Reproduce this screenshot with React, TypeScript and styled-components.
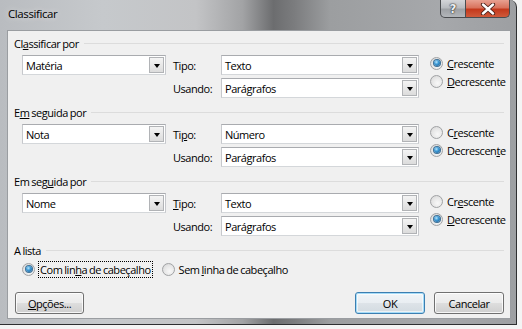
import styled, { createGlobalStyle, css } from 'styled-components'

const GlobalStyle = createGlobalStyle`
  html, body {
    margin: 0;
    padding: 0;
    background: #f4f4f4;
  }
  body {
    font-family: "Open Sans", "Noto Sans", sans-serif;
    font-size: 11px;
    letter-spacing: -0.46px;
    word-spacing: -0.5px;
    color: #000;
  }
`

const Window = styled.div`
  width: 517px;
  height: 325px;
  box-sizing: border-box;
  border-right: 1px solid #2e2f31;
  border-bottom: 1px solid #2e2f31;
  border-top-right-radius: 7px;
  background: linear-gradient(to right, #b9bcc0 0%, #c6c9cc 20%, #c3c4c6 38%, #a2a3a5 47%, #6c6d6f 53%, #7b7c7e 57%, #9c9ea0 64%, #a6a8ab 85%, #9d9fa2 100%);
  display: flex;
  flex-direction: column;
  padding: 0 5px 5px 7px;
`

const TitleBar = styled.div`
  height: 30px;
  display: flex;
  justify-content: space-between;
  align-items: flex-start;
`

const Title = styled.div`
  padding: 6px 0 0 1px;
  font-size: 11.5px;
  letter-spacing: -0.4px;
  color: #000;
  text-shadow: 0 0 6px rgba(255,255,255,0.7);
`

const Controls = styled.div`
  display: flex;
  margin-right: 1px;
`

const CtrlButton = styled.div<{ $close?: boolean }>`
  height: 18px;
  width: ${p => (p.$close ? 44 : 26)}px;
  box-sizing: border-box;
  border: 1px solid #4a4c4f;
  border-top: none;
  display: flex;
  align-items: center;
  justify-content: center;
  ${p => p.$close
    ? css`
      border-bottom-right-radius: 5px;
      border-left: none;
      background: linear-gradient(#e8a191 0%, #d9735d 45%, #c4391c 55%, #cf5a3b 100%);
    `
    : css`
      border-bottom-left-radius: 5px;
      background: linear-gradient(#d3d5d8 0%, #b9bcc0 45%, #9ea1a5 55%, #b3b6ba 100%);
    `}
`

const HelpGlyph = styled.span`
  font-family: "DejaVu Sans", sans-serif;
  font-weight: bold;
  font-size: 12px;
  letter-spacing: 0;
  color: #eceff2;
  text-shadow: 0 0 1px #333, 0 0 1px #333, 0 0 2px #444;
  line-height: 1;
`

const Client = styled.div`
  flex: 1;
  background: #f0f0f0;
  border: 1px solid #9a9da1;
  display: flex;
  flex-direction: column;
  padding: 5px 6px 0 6px;
`

const Section = styled.div`
  display: flex;
  flex-direction: column;
`

const Header = styled.div`
  display: flex;
  align-items: center;
  height: 14px;
  gap: 5px;
  white-space: nowrap;
  &::after {
    content: '';
    flex: 1;
    height: 1px;
    background: #dcdcdc;
  }
`

const Key = styled.u`
  text-decoration: underline;
  text-underline-offset: 1px;
`

const SortGrid = styled.div`
  display: grid;
  grid-template-columns: 144px 55px 198px 1fr;
  grid-template-rows: 20px 20px;
  row-gap: 3px;
  margin: 5px 0 7px 8px;
`

const FieldLabel = styled.div<{ $row: number }>`
  grid-column: 2;
  grid-row: ${p => p.$row};
  align-self: center;
  padding-left: 7px;
`

const Combo = styled.div<{ $col: number; $row: number }>`
  grid-column: ${p => p.$col};
  grid-row: ${p => p.$row};
  box-sizing: border-box;
  height: 20px;
  background: #fff;
  border: 1px solid #a9abaf;
  border-left-color: #c6c8cc;
  border-right-color: #c6c8cc;
  border-bottom-color: #d4d7da;
  display: flex;
  align-items: center;
`

const ComboText = styled.span`
  flex: 1;
  padding-left: 3px;
`

const DropButton = styled.div`
  width: 15px;
  height: 16px;
  margin-right: 1px;
  box-sizing: border-box;
  border: 1px solid #b1b3b6;
  background: linear-gradient(#f4f4f4, #dcdcdc);
  display: flex;
  align-items: center;
  justify-content: center;
  &::before {
    content: '';
    border-left: 3.5px solid transparent;
    border-right: 3.5px solid transparent;
    border-top: 4px solid #000;
    margin-top: 1px;
  }
`

const RadioGroup = styled.div`
  grid-column: 4;
  grid-row: 1 / span 2;
  display: flex;
  flex-direction: column;
  gap: 4px;
  padding: 1px 0 0 11px;
`

const RadioItem = styled.label`
  display: flex;
  align-items: center;
  gap: 4px;
  height: 14px;
  white-space: nowrap;
`

const RadioCircle = styled.span<{ $checked?: boolean }>`
  width: 13px;
  height: 13px;
  box-sizing: border-box;
  border-radius: 50%;
  border: 1px solid #a0a2a4;
  background: radial-gradient(circle at 60% 65%, #f8f8f8 0%, #e6e6e6 55%, #d2d2d2 100%);
  display: flex;
  align-items: center;
  justify-content: center;
  flex-shrink: 0;
  ${p => p.$checked && css`
    &::after {
      content: '';
      width: 6px;
      height: 6px;
      border-radius: 50%;
      background: radial-gradient(circle at 40% 35%, #b9e5fb 0%, #3d9ad6 40%, #0f4f88 100%);
      box-shadow: 0 0 0 1px #3d6f95;
    }
  `}
`

const ListRow = styled.div`
  display: flex;
  align-items: center;
  gap: 10px;
  margin: 5px 0 0 8px;
  height: 14px;
`

const FocusText = styled.span`
  outline: 1px dotted #000;
  padding: 0 1px;
`

const Footer = styled.div`
  display: flex;
  align-items: center;
  margin-top: 16px;
`

const Spacer = styled.div`
  flex: 1;
`

const Button = styled.div<{ $default?: boolean; $w: number }>`
  width: ${p => p.$w}px;
  height: 22px;
  box-sizing: border-box;
  border: 1px solid #707070;
  border-radius: 3px;
  background: linear-gradient(#f2f2f2 0%, #ebebeb 48%, #dddddd 52%, #cfcfcf 100%);
  box-shadow: inset 0 0 0 1px rgba(255,255,255,0.8);
  display: flex;
  align-items: center;
  justify-content: center;
  margin-left: 9px;
  &:first-child {
    margin-left: 1px;
  }
  ${p => p.$default && css`
    border-color: #3c7fb1;
    box-shadow: inset 0 0 0 1px #a6dcf8, inset 0 0 0 2px rgba(255,255,255,0.6);
    background: linear-gradient(#f1f5f8 0%, #e9eef2 48%, #dde3e8 52%, #d2dbe1 100%);
  `}
`

const CloseIcon = () => (
  <svg width="16" height="12" viewBox="0 0 16 12">
    <path d="M3 1.5 L13 10.5 M13 1.5 L3 10.5" stroke="#4a2018" strokeWidth="4.2" strokeLinecap="round" />
    <path d="M3 1.5 L13 10.5 M13 1.5 L3 10.5" stroke="#ffffff" strokeWidth="2.4" strokeLinecap="round" />
  </svg>
)

type SortProps = {
  header: React.ReactNode
  field: string
  tipoLabel: React.ReactNode
  tipo: string
  ascLabel: React.ReactNode
  descLabel: React.ReactNode
  ascending: boolean
}

const SortSection = ({ header, field, tipoLabel, tipo, ascLabel, descLabel, ascending }: SortProps) => (
  <Section>
    <Header>{header}</Header>
    <SortGrid>
      <Combo $col={1} $row={1}>
        <ComboText>{field}</ComboText>
        <DropButton />
      </Combo>
      <FieldLabel $row={1}>{tipoLabel}</FieldLabel>
      <Combo $col={3} $row={1}>
        <ComboText>{tipo}</ComboText>
        <DropButton />
      </Combo>
      <FieldLabel $row={2}>Usando:</FieldLabel>
      <Combo $col={3} $row={2}>
        <ComboText>Parágrafos</ComboText>
        <DropButton />
      </Combo>
      <RadioGroup>
        <RadioItem><RadioCircle $checked={ascending} />{ascLabel}</RadioItem>
        <RadioItem><RadioCircle $checked={!ascending} />{descLabel}</RadioItem>
      </RadioGroup>
    </SortGrid>
  </Section>
)

function App() {
  return (
    <>
      <GlobalStyle />
      <Window>
        <TitleBar>
          <Title>Classificar</Title>
          <Controls>
            <CtrlButton><HelpGlyph>?</HelpGlyph></CtrlButton>
            <CtrlButton $close><CloseIcon /></CtrlButton>
          </Controls>
        </TitleBar>
        <Client>
          <SortSection
            header={<span>Cl<Key>a</Key>ssificar por</span>}
            field="Matéria"
            tipoLabel="Tipo:"
            tipo="Texto"
            ascLabel={<span><Key>C</Key>rescente</span>}
            descLabel={<span><Key>D</Key>ecrescente</span>}
            ascending
          />
          <SortSection
            header={<span>E<Key>m</Key> seguida por</span>}
            field="Nota"
            tipoLabel={<span>Ti<Key>p</Key>o:</span>}
            tipo="Número"
            ascLabel={<span>C<Key>r</Key>escente</span>}
            descLabel={<span>Decrescen<Key>t</Key>e</span>}
            ascending={false}
          />
          <SortSection
            header={<span>Em seg<Key>u</Key>ida por</span>}
            field="Nome"
            tipoLabel={<span><Key>T</Key>ipo:</span>}
            tipo="Texto"
            ascLabel={<span>Cr<Key>e</Key>scente</span>}
            descLabel={<span><Key>D</Key>ecrescente</span>}
            ascending={false}
          />
          <Section>
            <Header>A lista</Header>
            <ListRow>
              <RadioItem><RadioCircle $checked /><FocusText>Com lin<Key>h</Key>a de cabeçalho</FocusText></RadioItem>
              <RadioItem><RadioCircle /><span>Sem <Key>l</Key>inha de cabeçalho</span></RadioItem>
            </ListRow>
          </Section>
          <Footer>
            <Button $w={69}><span><Key>O</Key>pções...</span></Button>
            <Spacer />
            <Button $w={70} $default>OK</Button>
            <Button $w={70}>Cancelar</Button>
          </Footer>
        </Client>
      </Window>
    </>
  )
}

export default App
